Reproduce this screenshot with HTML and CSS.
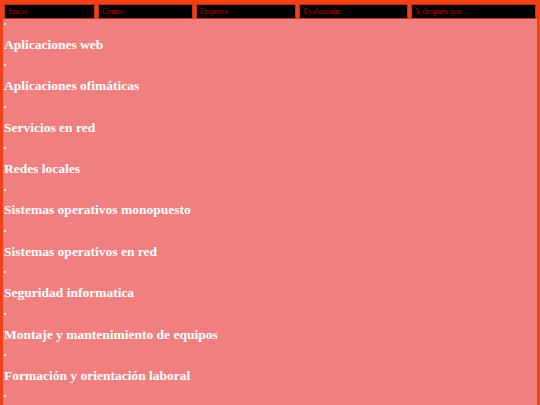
FILE: index.html
```html
<!DOCTYPE html>
<html lang="es">
<head>
<meta charset="utf-8">
<title>Ciclo</title>
<link rel="stylesheet" href="styles.css">
</head>
<body>
<nav class="menu">
  <a class="menu-item" href="#">Inicio</a>
  <a class="menu-item" href="#">Centro</a>
  <a class="menu-item" href="#">Empresa</a>
  <a class="menu-item" href="#">Evaluación</a>
  <a class="menu-item" href="#">Y después que...</a>
</nav>
<ul class="modules">
  <li class="module"><h3 class="module-title">Aplicaciones web</h3></li>
  <li class="module"><h3 class="module-title">Aplicaciones ofimáticas</h3></li>
  <li class="module"><h3 class="module-title">Servicios en red</h3></li>
  <li class="module"><h3 class="module-title">Redes locales</h3></li>
  <li class="module"><h3 class="module-title">Sistemas operativos monopuesto</h3></li>
  <li class="module"><h3 class="module-title">Sistemas operativos en red</h3></li>
  <li class="module"><h3 class="module-title">Seguridad informatica</h3></li>
  <li class="module"><h3 class="module-title">Montaje y mantenimiento de equipos</h3></li>
  <li class="module"><h3 class="module-title">Formación y orientación laboral</h3></li>
  <li class="module"></li>
</ul>
</body>
</html>
```
FILE: styles.css
```css
html, body {
  margin: 0;
  padding: 0;
}
body {
  background: #f53f16;
  padding: 4px 3px 0 3px;
  font-family: "Liberation Serif", "Times New Roman", serif;
  height: 405px;
  box-sizing: border-box;
  overflow: hidden;
}
.menu {
  display: flex;
  gap: 3px;
  padding: 0 1px 0 1px;
}
.menu-item {
  flex: 1 1 auto;
  background: #000;
  border: 1px solid #c8321a;
  color: #b00000;
  font-size: 8px;
  line-height: 13px;
  padding: 0 0 0 3px;
  text-decoration: none;
  white-space: nowrap;
}
.modules {
  margin: 0;
  padding: 1px 0 0 1px;
  background: #f08080;
  list-style: disc inside;
  color: #fff;
  min-height: 400px;
}
.module {
  font-size: 8px;
  line-height: 8px;
}
.module::marker {
  color: #fff;
}
.module-title {
  font-size: 13.5px;
  line-height: 15.5px;
  margin: 8.95px 0;
  font-weight: bold;
  color: #fff;
}
```
